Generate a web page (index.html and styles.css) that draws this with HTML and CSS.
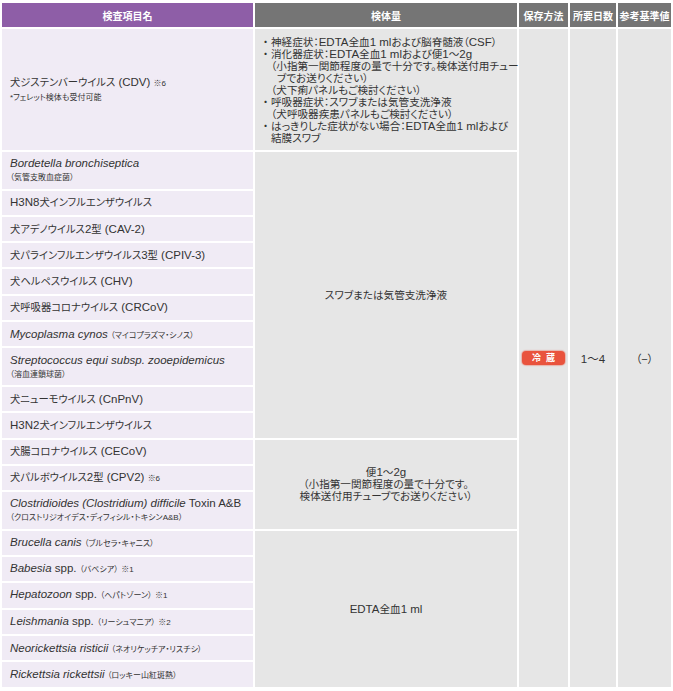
FILE: index.html
```html
<!DOCTYPE html>
<html lang="ja">
<head>
<meta charset="utf-8">
<title>検査項目</title>
<link rel="stylesheet" href="styles.css">
</head>
<body>
<table class="tests">
  <colgroup>
    <col class="c-name">
    <col class="c-spec">
    <col class="c-store">
    <col class="c-days">
    <col class="c-ref">
  </colgroup>
  <thead>
    <tr class="head">
      <th class="h-name">検査項目名</th>
      <th>検体量</th>
      <th>保存方法</th>
      <th>所要日数</th>
      <th>参考基準値</th>
    </tr>
  </thead>
  <tbody>
    <tr class="cdv">
      <td class="name">犬ジステンバーウイルス<span class="en"> (CDV) </span><span class="note">※6</span><br><span class="sub">*フェレット検体も受付可能</span></td>
      <td class="spec list-cell">
        <ul class="spec-list">
          <li><span>神経症状：<span class="en">EDTA</span>全血<span class="en">1 ml</span>および脳脊髄液（<span class="en">CSF</span>）</span></li>
          <li><span>消化器症状：<span class="en">EDTA</span>全血<span class="en">1 ml</span>および便<span class="en">1</span>～<span class="en">2g</span><br>（小指第一関節程度の量で十分です。検体送付用チュー<br><span class="ind">ブでお送りください）</span><br>（犬下痢パネルもご検討ください）</span></li>
          <li><span>呼吸器症状：スワブまたは気管支洗浄液<br>（犬呼吸器疾患パネルもご検討ください）</span></li>
          <li><span>はっきりした症状がない場合：<span class="en">EDTA</span>全血<span class="en">1 ml</span>および<br>結膜スワブ</span></li>
        </ul>
      </td>
      <td class="mid" rowspan="20"><span class="badge">冷蔵</span></td>
      <td class="mid" rowspan="20"><span class="en">1～4</span></td>
      <td class="mid" rowspan="20">（−）</td>
    </tr>
    <tr class="d">
      <td class="name"><i>Bordetella bronchiseptica</i><br><span class="sub">（気管支敗血症菌）</span></td>
      <td class="spec center" rowspan="10">スワブまたは気管支洗浄液</td>
    </tr>
    <tr class="s"><td class="name"><span class="en">H3N8</span>犬インフルエンザウイルス</td></tr>
    <tr class="s"><td class="name">犬アデノウイルス<span class="en">2</span>型<span class="en"> (CAV-2)</span></td></tr>
    <tr class="s"><td class="name">犬パラインフルエンザウイルス<span class="en">3</span>型<span class="en"> (CPIV-3)</span></td></tr>
    <tr class="s"><td class="name">犬ヘルペスウイルス<span class="en"> (CHV)</span></td></tr>
    <tr class="s"><td class="name">犬呼吸器コロナウイルス<span class="en"> (CRCoV)</span></td></tr>
    <tr class="s"><td class="name"><i>Mycoplasma cynos</i> <span class="sub">（マイコプラズマ・シノス）</span></td></tr>
    <tr class="d"><td class="name"><i>Streptococcus equi subsp. zooepidemicus</i><br><span class="sub">（溶血連鎖球菌）</span></td></tr>
    <tr class="s"><td class="name">犬ニューモウイルス<span class="en"> (CnPnV)</span></td></tr>
    <tr class="s"><td class="name"><span class="en">H3N2</span>犬インフルエンザウイルス</td></tr>
    <tr class="s">
      <td class="name">犬腸コロナウイルス<span class="en"> (CECoV)</span></td>
      <td class="spec center" rowspan="3">便<span class="en">1</span>～<span class="en">2g</span><br>（小指第一関節程度の量で十分です。<br>検体送付用チューブでお送りください）</td>
    </tr>
    <tr class="s"><td class="name">犬パルボウイルス<span class="en">2</span>型<span class="en"> (CPV2) </span><span class="note">※6</span></td></tr>
    <tr class="d"><td class="name"><i>Clostridioides (Clostridium) difficile</i><span class="en"> Toxin A&amp;B</span><br><span class="sub">（クロストリジオイデス・ディフィシル・トキシンA&amp;B）</span></td></tr>
    <tr class="s">
      <td class="name"><i>Brucella canis</i> <span class="sub">（ブルセラ・キャニス）</span></td>
      <td class="spec center" rowspan="6"><span class="en">EDTA</span>全血<span class="en">1 ml</span></td>
    </tr>
    <tr class="s"><td class="name"><i>Babesia</i><span class="en"> spp. </span><span class="sub">（バベシア）</span> <span class="note">※1</span></td></tr>
    <tr class="s"><td class="name"><i>Hepatozoon</i><span class="en"> spp. </span><span class="sub">（ヘパトゾーン）</span> <span class="note">※1</span></td></tr>
    <tr class="s"><td class="name"><i>Leishmania</i><span class="en"> spp. </span><span class="sub">（リーシュマニア）</span> <span class="note">※2</span></td></tr>
    <tr class="s"><td class="name"><i>Neorickettsia risticii</i> <span class="sub">（ネオリケッチア・リスチシ）</span></td></tr>
    <tr class="s"><td class="name"><i>Rickettsia rickettsii</i> <span class="sub">（ロッキー山紅斑熱）</span></td></tr>
  </tbody>
</table>
</body>
</html>
```

FILE: styles.css
```css
html, body {
  margin: 0;
  padding: 0;
  background: #ffffff;
}

body {
  font-family: "Liberation Sans", "Noto Sans CJK JP", sans-serif;
  font-size: 10.3px;
  color: #333333;
  font-feature-settings: "palt";
}

.en,
i {
  font-size: 11.5px;
}

.tests {
  width: 673px;
  margin-top: 1px;
  table-layout: fixed;
  border-collapse: separate;
  border-spacing: 2px;
  background: #ffffff;
}

.c-name { width: 251px; }
.c-spec { width: 262px; }
.c-store { width: 49px; }
.c-days { width: 46px; }
.c-ref { width: 53px; }

.head {
  height: 24px;
}

.head th {
  padding: 0;
  background: #757575;
  color: #ffffff;
  font-size: 10px;
  font-weight: bold;
  white-space: nowrap;
  text-align: center;
  vertical-align: middle;
}

.head th.h-name {
  background: #8e5ea7;
}

.cdv { height: 121px; }
.s { height: 24.3px; }
.d { height: 36.6px; }

td {
  padding: 0;
  vertical-align: middle;
  background: #e6e6e6;
}

td.name {
  background: #f0ebf5;
  padding: 0 8px;
  line-height: 13px;
  white-space: nowrap;
}

.sub {
  font-size: 8px;
  line-height: 10px;
}

.note {
  font-size: 8px;
}

td.spec {
  font-size: 10.6px;
  line-height: 12px;
  white-space: nowrap;
}

td.list-cell {
  padding: 0 4px 0 8px;
}

.spec-list {
  list-style: none;
  margin: 0;
  padding: 0;
}

.spec-list li {
  display: flex;
}

.spec-list li::before {
  content: "・";
  flex: none;
  width: 8px;
}

.ind {
  padding-left: 6px;
}

td.center {
  text-align: center;
}

td.mid {
  text-align: center;
  font-size: 11px;
}

.badge {
  display: inline-block;
  width: 43px;
  height: 14px;
  line-height: 14px;
  border-radius: 4px;
  background: #e9533d;
  box-shadow: 0 0 1px 1px rgba(233, 83, 61, 0.35);
  color: #ffffff;
  font-size: 9px;
  font-weight: bold;
  letter-spacing: 5px;
  text-indent: 5px;
  text-align: center;
}
```
